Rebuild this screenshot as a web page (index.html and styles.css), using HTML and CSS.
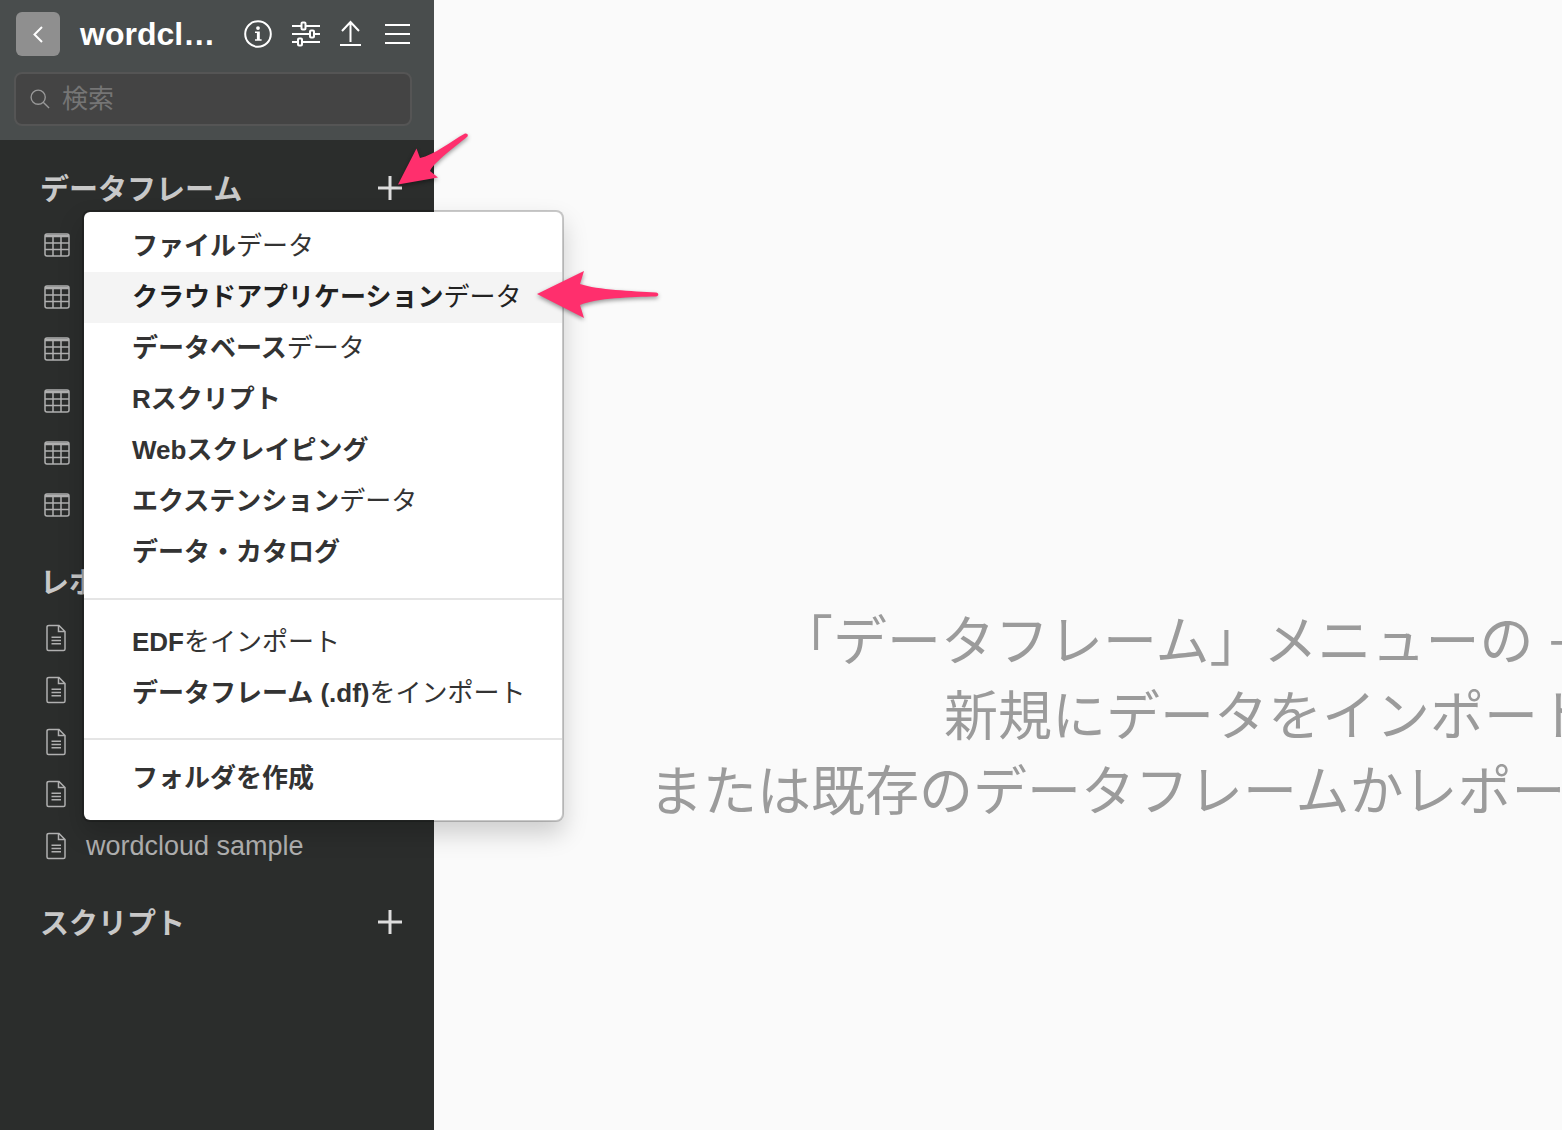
FILE: index.html
```html
<!DOCTYPE html>
<html lang="ja">
<head>
<meta charset="utf-8">
<meta name="viewport" content="width=device-width, initial-scale=1">
<title>wordcloud</title>
<link rel="stylesheet" href="styles.css">
</head>
<body>
<svg class="symbols" aria-hidden="true">
  <symbol id="table" viewBox="0 0 26 24"><rect x="1" y="1" width="24" height="22" rx="2"/><path d="M1 2.500h24M1 3.500h24M1 10h24M1 16.500h24M9 3v20M17 3v20"/></symbol>
  <symbol id="doc" viewBox="0 0 20 28"><path d="M3 1.500h10l6 6V25q0 1.500-1.500 1.500H2.500Q1 26.500 1 25V3q0-1.500 2-1.500zM12.500 1.500V7.500H19"/><path d="M5.500 13.200h9.500M5.500 16.500h9.500M5.500 19.800h9.500"/></symbol>
  <symbol id="plus" viewBox="0 0 24 24"><path d="M12 0v24M0 12h24"/></symbol>
</svg>
<div class="app">
  <aside class="sidebar">
    <header class="head">
      <div class="toolbar">
        <button class="back" aria-label="戻る"><svg width="44" height="44" viewBox="0 0 44 44"><path d="M26 15l-7.500 7.500 7.500 7.500"/></svg></button>
        <h1 class="title">wordcl…</h1>
        <button class="tool" aria-label="情報"><svg width="28" height="28" viewBox="0 0 28 28"><circle cx="14" cy="14" r="12.800"/><path class="solid" d="M14 6.200a1.900 1.900 0 1 1 0 3.800 1.900 1.900 0 0 1 0-3.800zM11 11.500h4.800v7.700h1.800v1.500h-6.600v-1.500h1.900v-6.200H11z"/></svg></button>
        <button class="tool" aria-label="設定"><svg width="28" height="28" viewBox="0 0 28 28"><path d="M0 6h9.500M14 6h14M0 14h18M22.500 14H28M0 22h6M10.500 22H28"/><rect x="9.500" y="2.500" width="4" height="7" rx="1"/><rect x="18" y="10.500" width="4" height="7" rx="1"/><rect x="6" y="18.500" width="4" height="7" rx="1"/></svg></button>
        <button class="tool" aria-label="アップロード"><svg width="22" height="28" viewBox="0 0 22 28"><path d="M10.500 22V3M2 11l8.500-9 8.500 9M0 25h21"/></svg></button>
        <button class="tool" aria-label="メニュー"><svg width="28" height="28" viewBox="0 0 28 28"><path d="M3 5h25M3 14h25M3 23h25"/></svg></button>
      </div>
      <label class="search">
        <svg width="20" height="20" viewBox="0 0 22 22"><circle cx="9" cy="9" r="7.800"/><path d="M14.500 14.500L21 21"/></svg>
        <input type="search" placeholder="検索" aria-label="検索">
      </label>
    </header>
    <nav class="sections">
      <section class="section">
        <div class="section-head">
          <h2>データフレーム</h2>
          <button class="add" aria-label="データフレームを追加"><svg width="24" height="24"><use href="#plus"/></svg></button>
          <div class="menu" role="menu">
            <div class="group">
              <button role="menuitem"><b>ファイル</b>データ</button>
              <button role="menuitem" class="active"><b>クラウドアプリケーション</b>データ</button>
              <button role="menuitem"><b>データベース</b>データ</button>
              <button role="menuitem"><b>Rスクリプト</b></button>
              <button role="menuitem"><b>Webスクレイピング</b></button>
              <button role="menuitem"><b>エクステンション</b>データ</button>
              <button role="menuitem"><b>データ・カタログ</b></button>
            </div>
            <div class="group">
              <button role="menuitem"><b>EDF</b>をインポート</button>
              <button role="menuitem"><b>データフレーム (.df)</b>をインポート</button>
            </div>
            <div class="group">
              <button role="menuitem"><b>フォルダを作成</b></button>
            </div>
          </div>
        </div>
        <a class="row" href="#" aria-label="データフレーム 1"><svg width="26" height="24"><use href="#table"/></svg></a>
        <a class="row" href="#" aria-label="データフレーム 2"><svg width="26" height="24"><use href="#table"/></svg></a>
        <a class="row" href="#" aria-label="データフレーム 3"><svg width="26" height="24"><use href="#table"/></svg></a>
        <a class="row" href="#" aria-label="データフレーム 4"><svg width="26" height="24"><use href="#table"/></svg></a>
        <a class="row" href="#" aria-label="データフレーム 5"><svg width="26" height="24"><use href="#table"/></svg></a>
        <a class="row" href="#" aria-label="データフレーム 6"><svg width="26" height="24"><use href="#table"/></svg></a>
      </section>
      <section class="section">
        <div class="section-head"><h2>レポ</h2></div>
        <a class="row" href="#" aria-label="レポート 1"><svg width="24" height="28"><use href="#doc"/></svg></a>
        <a class="row" href="#" aria-label="レポート 2"><svg width="24" height="28"><use href="#doc"/></svg></a>
        <a class="row" href="#" aria-label="レポート 3"><svg width="24" height="28"><use href="#doc"/></svg></a>
        <a class="row" href="#" aria-label="レポート 4"><svg width="24" height="28"><use href="#doc"/></svg></a>
        <a class="row" href="#"><svg width="24" height="28"><use href="#doc"/></svg>wordcloud sample</a>
      </section>
      <section class="section">
        <div class="section-head">
          <h2>スクリプト</h2>
          <button class="add" aria-label="スクリプトを追加"><svg width="24" height="24"><use href="#plus"/></svg></button>
        </div>
      </section>
    </nav>
  </aside>
  <main class="content">
    <p class="line first">「データフレーム」メニューの +</p>
    <p class="line second">新規にデータをインポート</p>
    <p class="line">または既存のデータフレームかレポー</p>
  </main>
  <svg class="arrow arrow-add" width="74" height="56" viewBox="0 0 74 56" aria-hidden="true"><path d="M2 54.500L20.500 18.500 24 28C38 25 54 12 69 3.500 71 3 72.500 4.500 71.500 6.500 58 18 39 31 34 41L42 47.500z"/></svg>
  <svg class="arrow arrow-item" width="126" height="54" viewBox="0 0 126 54" aria-hidden="true"><path d="M1 26L48 3 44 16C62 22 96 23 120 24.500 123 25 123 28 120 28.500 96 29 60 30 44 37L48 50z"/></svg>
</div>
</body>
</html>
```
FILE: styles.css
```css
* { box-sizing: border-box; }

body {
  margin: 0;
  background: #fafafa;
  font-family: "Liberation Sans", "Noto Sans CJK JP", sans-serif;
  font-size: 26px;
  color: #333;
}

h1, h2, p { margin: 0; }

button {
  padding: 0;
  border: 0;
  background: none;
  font: inherit;
  color: inherit;
}

svg {
  display: block;
  flex: none;
  fill: none;
  stroke: currentColor;
  stroke-width: 2;
}

.symbols { position: absolute; width: 0; height: 0; }
#table, #doc { stroke-width: 1.5; }

.app {
  position: relative;
  display: flex;
  min-height: 100vh;
}

/* Sidebar */
.sidebar {
  flex: none;
  width: 434px;
  background: #2b2d2c;
  color: #c8c8c8;
}

.head {
  padding: 12px 22px 14px 14px;
  background: #494d4d;
  color: #fff;
}

.toolbar {
  display: flex;
  align-items: center;
  gap: 20px;
  padding: 0 2px;
  margin-bottom: 16px;
}

.back {
  border-radius: 6px;
  background: #8f8f8f;
}

.title {
  flex: 1;
  min-width: 0;
  font-size: 32px;
  line-height: 44px;
  white-space: nowrap;
}

.solid { fill: currentColor; stroke: none; }

.search {
  display: flex;
  align-items: center;
  gap: 12px;
  height: 54px;
  padding: 0 14px;
  border: 2px solid #555;
  border-radius: 8px;
  background: #444;
  color: #999;
}

.search svg { stroke-width: 1.5; }

.search input {
  flex: 1;
  min-width: 0;
  padding: 0;
  border: 0;
  outline: 0;
  background: none;
  font: inherit;
  color: #fff;
}

.search input::placeholder { color: #757575; }

.sections {
  display: flex;
  flex-direction: column;
  gap: 20px;
  padding-top: 18px;
}

.section-head {
  position: relative;
  display: flex;
  align-items: center;
  justify-content: space-between;
  height: 60px;
  padding: 0 32px 0 40px;
}

.section-head h2 {
  padding-top: 3px;
  font-size: 29px;
  line-height: 40px;
}

.add svg { color: #ddd; stroke-width: 3; }

.row {
  display: flex;
  align-items: center;
  gap: 18px;
  height: 52px;
  padding-left: 44px;
  font-size: 27px;
  color: #b0b0b0;
  text-decoration: none;
}

.section-head + .row { margin-top: 1px; }

/* Popup menu of the add button */
.menu {
  position: absolute;
  z-index: 2;
  top: 52px;
  left: 82px;
  width: 482px;
  border: 2px solid rgba(0, 0, 0, 0.2);
  border-radius: 8px;
  background: #fff;
  background-clip: padding-box;
  box-shadow: 0 12px 24px rgba(0, 0, 0, 0.175);
  color: #333;
}

.group { padding: 9px 0 20px; }
.group + .group { padding: 17px 0 19px; border-top: 2px solid #e5e5e5; }
.group:last-child { padding: 13px 0 16px; }

.menu button {
  display: block;
  width: 100%;
  padding-left: 48px;
  line-height: 51px;
  text-align: left;
  white-space: nowrap;
}

.menu b { font-weight: 700; }
.menu .active { background: #f4f4f4; color: #222; }

/* Main area */
.content {
  flex: 1;
  min-width: 0;
  overflow: hidden;
  padding: 605px 0 0 215px;
}

.line {
  font-size: 54px;
  line-height: 75px;
  white-space: nowrap;
  color: #9b9b9b;
}

.first { padding-left: 130px; }
.second { padding-left: 295px; }

/* Callout arrows */
.arrow {
  position: absolute;
  z-index: 3;
  fill: #ff2f6d;
  stroke: none;
  filter: drop-shadow(0 2px 2px rgba(0, 0, 0, 0.4));
}

.arrow-add { top: 130px; left: 396px; }
.arrow-item { top: 268px; left: 536px; }
```
